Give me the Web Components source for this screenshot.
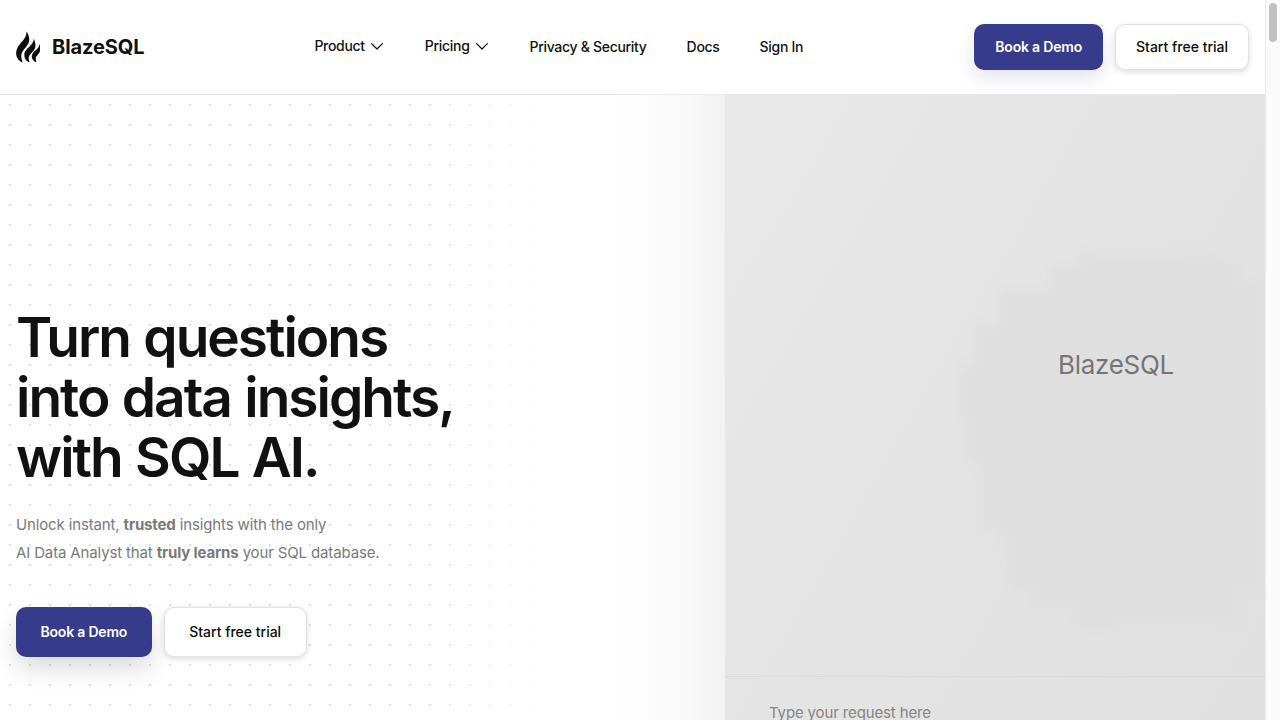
<!DOCTYPE html>
<html lang="en">
<head>
  <meta charset="UTF-8">
  <title>BlazeSQL</title>
  <style>
    html, body {
      margin: 0;
      height: 720px;
      overflow: hidden;
      background: #fff;
    }
    body {
      display: flex;
      font-family: Inter, "Liberation Sans", sans-serif;
    }
    site-page { flex: 1; min-width: 0; }
  </style>
</head>
<body>
  <site-page>
    <site-header></site-header>
    <hero-section>
      <chat-panel></chat-panel>
    </hero-section>
  </site-page>
  <page-scrollbar></page-scrollbar>

  <script>
    // Shared button, solid or outline depending on the "kind" attribute
    class CtaButton extends HTMLElement {
      constructor() {
        super();
        this.attachShadow({ mode: 'open' });
        this.shadowRoot.innerHTML = `
          <style>
            :host {
              display: inline-flex;
              align-items: center;
              justify-content: center;
              box-sizing: border-box;
              height: 46px;
              padding: 0 20px 2px;
              border-radius: 10px;
              font-size: 14px;
              font-weight: 500;
              white-space: nowrap;
              cursor: pointer;
            }
            :host([kind="solid"]) {
              background: #373b8b;
              color: #fff;
              font-weight: 600;
              letter-spacing: -.2px;
              padding: 0 21px 2px;
              box-shadow: 0 8px 18px rgba(55, 59, 139, .14);
            }
            :host([kind="outline"]) {
              background: #fff;
              color: #0c0c0c;
              border: 1px solid #e0e0e0;
              box-shadow: 0 2px 6px rgba(0, 0, 0, .14);
            }
            :host([size="large"]) {
              height: 50px;
              padding: 0 24.5px 2px;
            }
            :host([size="large"][kind="solid"]) {
              padding: 0 24.5px 2px;
              box-shadow: 0 12px 24px rgba(0, 0, 0, .14);
            }
          </style>
          <slot></slot>
        `;
      }
    }
    customElements.define('cta-button', CtaButton);

    class NavLink extends HTMLElement {
      constructor() {
        super();
        this.attachShadow({ mode: 'open' });
        const caret = this.hasAttribute('caret')
          ? `<svg width="14" height="14" viewBox="0 0 14 14" fill="none" stroke="#111" stroke-width="1.2" stroke-linecap="round" stroke-linejoin="round"><path d="M1.6 4.600 7 10l5.400-5.400"/></svg>`
          : '';
        this.shadowRoot.innerHTML = `
          <style>
            :host {
              display: inline-flex;
              align-items: center;
              gap: 5px;
              font-size: 14px;
              font-weight: 500;
              letter-spacing: -.3px;
              color: #111;
              white-space: nowrap;
            }
            :host([caret]) { position: relative; top: -1px; }
            svg { position: relative; top: 1px; margin-right: 1px; }
          </style>
          <slot></slot>${caret}
        `;
      }
    }
    customElements.define('nav-link', NavLink);

    class BrandLogo extends HTMLElement {
      constructor() {
        super();
        this.attachShadow({ mode: 'open' });
        this.shadowRoot.innerHTML = `
          <style>
            :host {
              display: inline-flex;
              align-items: center;
              gap: 12px;
              font-size: 20px;
              font-weight: 700;
              color: #111;
              letter-spacing: -.1px;
            }
            svg { display: block; }
          </style>
          <svg width="24" height="32" viewBox="0 0 24 32" fill="#0e0e0e">
            <path d="M10.500 .5C13 4 14 8 12.500 12C11 16 6.500 19 5.500 23C5 26 5.500 28.500 6.500 30.500C6 31.200 5.300 31 4.500 30.600C1.500 28.500-.3 25 .2 21C.8 16 4.500 12.500 7 9.500C9 7 10.500 4.500 10.500 .5z"/>
            <path d="M17.700 8C19.800 11.500 20 15 18.700 18C17.200 21 13.500 23 12.800 26C12.500 27.800 12.800 29 13.600 30.600C13.200 31.200 12.500 31.100 11.900 30.800C9.400 29 8 26.300 8.300 23C8.700 19.500 12 17 14.500 14.500C16 13 17.500 11 17.700 8z"/>
            <path d="M23.600 13C25 16 24.700 19 23.400 21.500C22.300 23.600 20 25.200 19.700 27.300C19.600 28.600 19.900 29.600 20.500 30.600C20.100 31.200 19.500 31.100 19 30.800C16.800 29.400 15.600 27.300 15.800 24.800C16.100 21.800 19 20 21 18C22.300 16.800 23.300 15.300 23.600 13z"/>
          </svg>
          <slot></slot>
        `;
      }
    }
    customElements.define('brand-logo', BrandLogo);

    class SiteHeader extends HTMLElement {
      constructor() {
        super();
        this.attachShadow({ mode: 'open' });
        this.shadowRoot.innerHTML = `
          <style>
            :host {
              display: flex;
              align-items: center;
              box-sizing: border-box;
              position: relative;
              z-index: 2;
              height: 95px;
              padding: 0 16px;
              background: #fff;
              border-bottom: 1px solid #e8e8e8;
            }
            nav {
              display: flex;
              align-items: center;
              gap: 40px;
              margin: -2px 0 0 170px;
            }
            .actions {
              display: flex;
              gap: 12px;
              margin-left: auto;
            }
          </style>
          <brand-logo>BlazeSQL</brand-logo>
          <nav>
            <nav-link caret>Product</nav-link>
            <nav-link caret>Pricing</nav-link>
            <nav-link>Privacy &amp; Security</nav-link>
            <nav-link>Docs</nav-link>
            <nav-link>Sign In</nav-link>
          </nav>
          <div class="actions">
            <cta-button kind="solid">Book a Demo</cta-button>
            <cta-button kind="outline">Start free trial</cta-button>
          </div>
        `;
      }
    }
    customElements.define('site-header', SiteHeader);

    class HeroSection extends HTMLElement {
      constructor() {
        super();
        this.attachShadow({ mode: 'open' });
        this.shadowRoot.innerHTML = `
          <style>
            :host {
              display: flex;
              height: 625px;
              overflow: hidden;
              background-color: #fff;
              background-image: radial-gradient(circle at 10px 10px, #dedede 0, #dedede 1px, transparent 1.2px);
              background-size: 20px 20px;
            }
            .copy {
              flex: 0 0 725px;
              box-sizing: border-box;
              padding: 212px 16px 0;
              background: linear-gradient(90deg, rgba(255,255,255,0) 0, rgba(255,255,255,0) 400px, #fff 560px, #fff 610px, #fafafa 680px, #f1f1f1 725px);
            }
            h1 {
              margin: 0;
              font-size: 55px;
              line-height: 60px;
              font-weight: 600;
              letter-spacing: -2px;
              word-spacing: 1.5px;
              color: #111;
            }
            p {
              margin: 24px 0 0;
              font-size: 15px;
              line-height: 28px;
              letter-spacing: -.14px;
              color: #7a7a7a;
            }
            b { font-weight: 700; }
            .buttons {
              display: flex;
              gap: 12px;
              margin-top: 40px;
            }
            ::slotted(chat-panel) { flex: 1; }
          </style>
          <div class="copy">
            <h1>Turn questions<br>into data insights,<br>with SQL AI.</h1>
            <p>Unlock instant, <b>trusted</b> insights with the only<br>AI Data Analyst that <b>truly learns</b> your SQL database.</p>
            <div class="buttons">
              <cta-button kind="solid" size="large">Book a Demo</cta-button>
              <cta-button kind="outline" size="large">Start free trial</cta-button>
            </div>
          </div>
          <slot></slot>
        `;
      }
    }
    customElements.define('hero-section', HeroSection);

    // Grey chat mockup with the loading placeholder and the request input
    class ChatPanel extends HTMLElement {
      constructor() {
        super();
        this.attachShadow({ mode: 'open' });
        this.shadowRoot.innerHTML = `
          <style>
            :host {
              display: flex;
              flex-direction: column;
              position: relative;
              overflow: hidden;
              background: linear-gradient(120deg, #e9e9e9 0%, #e3e3e3 55%, #e0e0e0 100%);
              color: #777;
            }
            .stage {
              flex: 0 0 582px;
              box-sizing: border-box;
              display: flex;
              justify-content: flex-end;
              align-items: flex-start;
              border-bottom: 1px solid #d8d8d8;
            }
            .name {
              position: relative;
              margin: 254px 91px 0 0;
              font-size: 26px;
              line-height: 32px;
              letter-spacing: -.3px;
              color: #757575;
            }
            .blob {
              position: absolute;
              left: 225px;
              top: 150px;
              filter: blur(5px);
            }
            .input {
              padding: 26px 44px 0;
              font-size: 15px;
              line-height: 20px;
              letter-spacing: -.14px;
              color: #858585;
            }
          </style>
          <svg class="blob" width="320" height="400" viewBox="0 0 320 400">
            <path fill="#dfdfdf" d="M130 8H266V15H290V35H315V345H285V375H170V385H125V365H80V345H60V300H50V285H30V218H18V180H10V120H25V80H50V45H100V20H130z"/>
          </svg>
          <div class="stage"><span class="name">BlazeSQL</span></div>
          <div class="input">Type your request here</div>
        `;
      }
    }
    customElements.define('chat-panel', ChatPanel);

    class PageScrollbar extends HTMLElement {
      constructor() {
        super();
        this.attachShadow({ mode: 'open' });
        this.shadowRoot.innerHTML = `
          <style>
            :host {
              display: block;
              flex: 0 0 15px;
              box-sizing: border-box;
              padding: 3px 3px 0 3px;
              background: #fbfbfb;
              border-left: 1px solid #eaeaea;
            }
            div {
              height: 39px;
              border-radius: 4px;
              background: #c1c1c1;
            }
          </style>
          <div></div>
        `;
      }
    }
    customElements.define('page-scrollbar', PageScrollbar);
  </script>
</body>
</html>
